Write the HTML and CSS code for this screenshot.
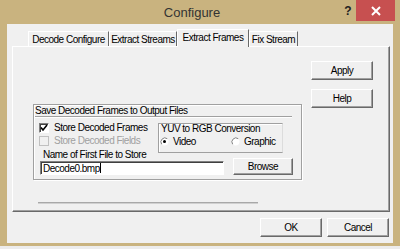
FILE: index.html
```html
<!DOCTYPE html>
<html lang="en">
<head>
	<meta charset="UTF-8">
	<title>Configure</title>
	<link rel="stylesheet" href="styles.css">
</head>
<body>
	<div class="window">
		<div class="titlebar">
			<div class="titlebar__title">Configure</div>
			<div class="titlebar__help">?</div>
			<div class="titlebar__close">
				<svg width="10" height="10" viewBox="0 0 10 10"><path d="M1 1L9 9M9 1L1 9" stroke="#fff" stroke-width="2"/></svg>
			</div>
		</div>
		<div class="client">
			<div class="tabs">
				<div class="tabs__strip">
					<div class="tab tab--w81">Decode Configure</div>
					<div class="tab tab--w68">Extract Streams</div>
					<div class="tab tab--w72 tab--active">Extract Frames</div>
					<div class="tab tab--w49">Fix Stream</div>
				</div>
				<div class="tabs__panel">
					<div class="panel-left">
						<div class="group">
							<div class="group__title">Save Decoded Frames to Output Files</div>
							<div class="group__sep"></div>
							<div class="options">
								<div class="checks">
									<div class="check">
										<span class="check__box">
											<svg width="8" height="8" viewBox="0 0 8 8"><path d="M1 3.5L3 6L7 1" fill="none" stroke="#000" stroke-width="1.6"/></svg>
										</span>
										Store Decoded Frames
									</div>
									<div class="check check--disabled">
										<span class="check__box"></span>
										Store Decoded Fields
									</div>
									<div class="file-label">Name of First File to Store</div>
								</div>
								<div class="yuv">
									<div class="yuv__title">YUV to RGB Conversion</div>
									<div class="yuv__radios">
										<div class="radio radio--first">
											<svg class="radio__dot" width="9" height="9" viewBox="0 0 9 9"><circle cx="4.5" cy="4.5" r="4" fill="#fff"/><path d="M1.7 7.3A4 4 0 0 1 7.3 1.7" fill="none" stroke="#808080"/><circle cx="4.5" cy="4.5" r="1.5" fill="#000"/></svg>
											Video
										</div>
										<div class="radio">
											<svg class="radio__dot" width="9" height="9" viewBox="0 0 9 9"><circle cx="4.5" cy="4.5" r="4" fill="#fff"/><path d="M1.7 7.3A4 4 0 0 1 7.3 1.7" fill="none" stroke="#808080"/></svg>
											Graphic
										</div>
									</div>
								</div>
							</div>
							<div class="file-row">
								<div class="edit">Decode0.bmp<span class="edit__caret"></span></div>
								<button class="btn btn--browse">Browse</button>
							</div>
						</div>
						<div class="progress"></div>
					</div>
					<div class="panel-right">
						<button class="btn">Apply</button>
						<button class="btn">Help</button>
					</div>
				</div>
			</div>
			<div class="footer">
				<button class="btn">OK</button>
				<button class="btn">Cancel</button>
			</div>
		</div>
	</div>
</body>
</html>
```

FILE: styles.css
```css
*{
	margin: 0;
	padding: 0;
	box-sizing: border-box;
}
body{
	width: 400px;
	height: 249px;
	overflow: hidden;
	background-color: #ececec;
	font-family: "Liberation Sans", Arial, sans-serif;
	font-size: 10px;
	letter-spacing: -0.5px;
	color: #000;
}

.window{
	display: flex;
	flex-direction: column;
	height: 246px;
	background-color: #c9b37f;
}

.titlebar{
	display: flex;
	align-items: flex-start;
	height: 24px;
}
.titlebar__title{
	flex: 1;
	padding-left: 43px;
	text-align: center;
	font-size: 13px;
	letter-spacing: 0;
	line-height: 26px;
	color: #333;
}
.titlebar__help{
	width: 14px;
	margin-top: 4px;
	text-align: center;
	font-weight: bold;
	font-size: 12px;
	letter-spacing: 0;
	color: #222;
}
.titlebar__close{
	display: flex;
	align-items: center;
	justify-content: center;
	width: 39px;
	height: 21px;
	margin-left: 1px;
	margin-right: 5px;
	background-color: #c75050;
}

.client{
	flex: 1;
	display: flex;
	flex-direction: column;
	margin: 0 7px 3px 7px;
	background-color: #f0f0f0;
}

.tabs{
	margin: 5px 3px 0 5px;
}
.tabs__strip{
	display: flex;
	align-items: flex-end;
	height: 17px;
	padding-left: 16px;
}
.tab{
	height: 15px;
	border: 1px solid #fff;
	border-right-color: #696969;
	border-bottom: none;
	text-align: center;
	line-height: 15px;
	white-space: nowrap;
}
.tab--w81{ width: 81px; }
.tab--w68{ width: 68px; }
.tab--w72{ width: 72px; }
.tab--w49{ width: 49px; }
.tab--active{
	position: relative;
	z-index: 1;
	height: 18px;
	margin-bottom: -1px;
	background-color: #f0f0f0;
	line-height: 16px;
}
.tabs__panel{
	display: flex;
	align-items: flex-start;
	height: 166px;
	border: 1px solid;
	border-color: #fff #696969 #696969 #fff;
	box-shadow: inset -1px -1px #a0a0a0;
}

.panel-left{
	margin-left: 20px;
	margin-top: 57px;
}
.panel-right{
	display: flex;
	flex-direction: column;
	gap: 9px;
	margin-left: 9px;
	margin-top: 14px;
}

.btn{
	width: 62px;
	height: 19px;
	border: 1px solid;
	border-color: #fff #696969 #696969 #fff;
	box-shadow: inset -1px -1px #a0a0a0;
	background-color: #f0f0f0;
	font-family: inherit;
	font-size: inherit;
	letter-spacing: inherit;
	color: #000;
}
.btn--browse{
	width: 60px;
	height: 17px;
	margin-left: 9px;
}

.group{
	width: 269px;
	height: 76px;
	border: 1px solid #a0a0a0;
	box-shadow: inset 1px 1px #fff, 1px 1px #fff;
}
.group__title{
	height: 11px;
	padding-left: 1px;
	line-height: 11px;
	white-space: nowrap;
}
.group__sep{
	width: 257px;
	height: 2px;
	margin-left: 1px;
	border-top: 1px solid #a0a0a0;
	border-bottom: 1px solid #fff;
}

.options{
	display: flex;
	align-items: flex-start;
}
.checks{
	width: 119px;
	margin-left: 5px;
	padding-top: 3px;
}
.check{
	display: flex;
	align-items: center;
	gap: 5px;
	height: 13px;
	white-space: nowrap;
}
.check__box{
	display: flex;
	align-items: center;
	justify-content: center;
	width: 10px;
	height: 10px;
	border: 1px solid;
	border-color: #808080 #fff #fff #808080;
	box-shadow: inset 1px 1px #404040;
	background-color: #fff;
}
.check--disabled{
	color: #a0a0a0;
}
.check--disabled .check__box{
	border-color: #c0c0c0;
	box-shadow: none;
	background-color: #f0f0f0;
}
.file-label{
	height: 11px;
	margin-left: 4px;
	line-height: 15px;
	white-space: nowrap;
}

.yuv{
	width: 125px;
	height: 30px;
	margin-top: 5px;
	border: 1px solid #a0a0a0;
	border-right-color: #dcdcdc;
	box-shadow: inset 1px 1px #fff;
}
.yuv__title{
	height: 10px;
	padding-left: 2px;
	line-height: 10px;
	white-space: nowrap;
}
.yuv__radios{
	display: flex;
	align-items: center;
	height: 14px;
}
.radio{
	display: flex;
	align-items: center;
	gap: 4px;
	white-space: nowrap;
}
.radio--first{
	width: 71px;
	margin-left: 1px;
}

.file-row{
	display: flex;
	align-items: flex-start;
}
.edit{
	display: flex;
	align-items: center;
	width: 184px;
	height: 14px;
	margin-top: 3px;
	margin-left: 6px;
	padding-left: 2px;
	border: 1px solid;
	border-color: #808080 #fff #fff #808080;
	box-shadow: inset 1px 1px #404040;
	background-color: #fff;
	white-space: nowrap;
}
.edit__caret{
	width: 1px;
	height: 10px;
	background-color: #000;
}

.progress{
	width: 220px;
	height: 2px;
	margin-top: 22px;
	margin-left: 5px;
	border-top: 1px solid #a8a8a8;
	border-bottom: 1px solid #d0d0d0;
}

.footer{
	display: flex;
	justify-content: flex-end;
	gap: 5px;
	margin-top: 6px;
	padding-right: 4px;
}
```
